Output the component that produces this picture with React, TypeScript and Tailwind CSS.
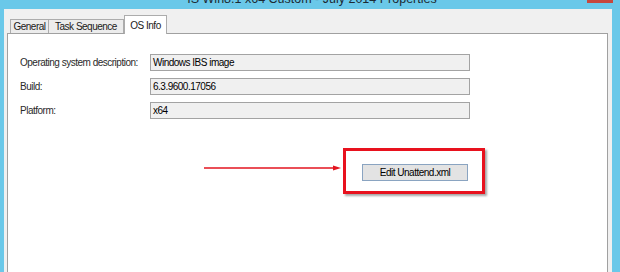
import React from "react";

const font = { fontFamily: '"Liberation Sans", Arial, sans-serif' };

export default function App() {
  const rows = [
    ["Operating system description:", "Windows IBS image"],
    ["Build:", "6.3.9600.17056"],
    ["Platform:", "x64"],
  ];
  return (
    <div
      className="w-[620px] h-[272px] bg-[#6ac8e9] overflow-hidden flex flex-col text-[#1a1a1a]"
      style={font}
    >
      <div className="h-[9px] relative flex justify-center overflow-hidden shrink-0">
        <div className="text-[12.5px] leading-[12px] -mt-[7px] ml-[4px] text-[#1c2a33] whitespace-nowrap">
          IS Win8.1 x64 Custom - July 2014 Properties
        </div>
        <div className="absolute right-[7px] top-0 w-[26px] h-[3px] bg-[#c7473d]" />
      </div>
      <div className="flex-1 ml-[4px] mr-[8px] bg-[#f0f0f0] pl-[3px] pr-[4px] pt-[6px] flex flex-col min-h-0">
        <div className="flex items-end pl-[3px] h-[18px] text-[10px] tracking-[-0.5px]">
          <div className="w-[39px] h-[14px] border border-b-0 border-[#acacac] bg-[#ececec] flex items-center justify-center">
            General
          </div>
          <div className="w-[75px] h-[14px] border border-b-0 border-l-0 border-[#acacac] bg-[#ececec] flex items-center justify-center">
            Task Sequence
          </div>
          <div className="w-[43px] h-[19px] -mb-[1px] relative z-10 border border-b-0 border-[#acacac] bg-white flex items-start pt-[2px] justify-center">
            OS Info
          </div>
        </div>
        <div className="flex-1 bg-white border border-b-0 border-[#a0a0a0] pl-[12px] pt-[20px] flex flex-col">
          <div className="flex flex-col gap-[7px] text-[10px] tracking-[-0.5px]">
            {rows.map(([l, v]) => (
              <div key={l} className="flex items-center h-[17px]">
                <div className="w-[130px] text-[#2a2a2a]">{l}</div>
                <div className="w-[320px] h-[17px] border border-[#a3a3a3] bg-[#f0f0f0] pl-[2px] flex items-center text-black">
                  {v}
                </div>
              </div>
            ))}
          </div>
          <div className="mt-[29px] flex items-start">
            <svg
              width="139"
              height="10"
              viewBox="0 0 139 10"
              className="ml-[184px] mt-[15px]"
            >
              <line x1="0" y1="5" x2="132" y2="5" stroke="#e3141f" strokeWidth="1.3" />
              <polygon points="137,5 129,2.5 129,7.5" fill="#e3141f" />
            </svg>
            <div className="w-[142px] h-[46px] border-[3px] border-[#e8121e] shadow-[2px_2px_2px_rgba(0,0,0,0.35)] bg-white pl-[16px] pt-[13px]">
              <div className="w-[106px] h-[17px] border border-[#8aa4c1] bg-[#e3e3e3] flex items-center justify-center text-[10px] tracking-[-0.5px] text-black">
                Edit Unattend.xml
              </div>
            </div>
          </div>
        </div>
      </div>
    </div>
  );
}
